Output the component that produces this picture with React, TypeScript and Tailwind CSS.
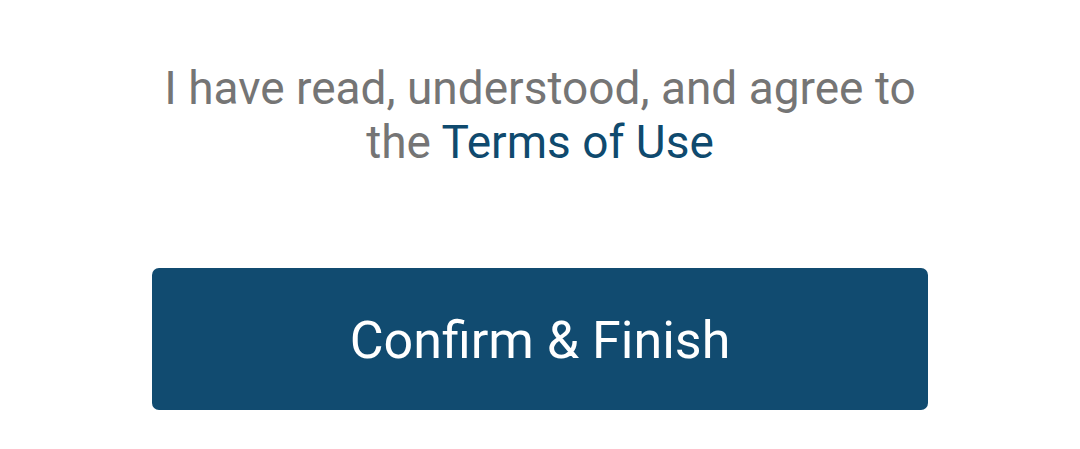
export default function App() {
  return (
    <div className="flex flex-col items-center bg-white w-[1080px] h-[449px] font-['Roboto',sans-serif]">
      <p className="mt-[61px] text-center text-[46px] leading-[54px] text-[#757575]">
        I have read, understood, and agree to
        <br />
        the <span className="text-[#0f4a6e]">Terms of Use</span>
      </p>
      <button className="mt-[99px] w-[776px] h-[142px] rounded-[7px] bg-[#114b70] text-white text-[52px] pt-[4px]">
        Confirm &amp; Finish
      </button>
    </div>
  );
}
